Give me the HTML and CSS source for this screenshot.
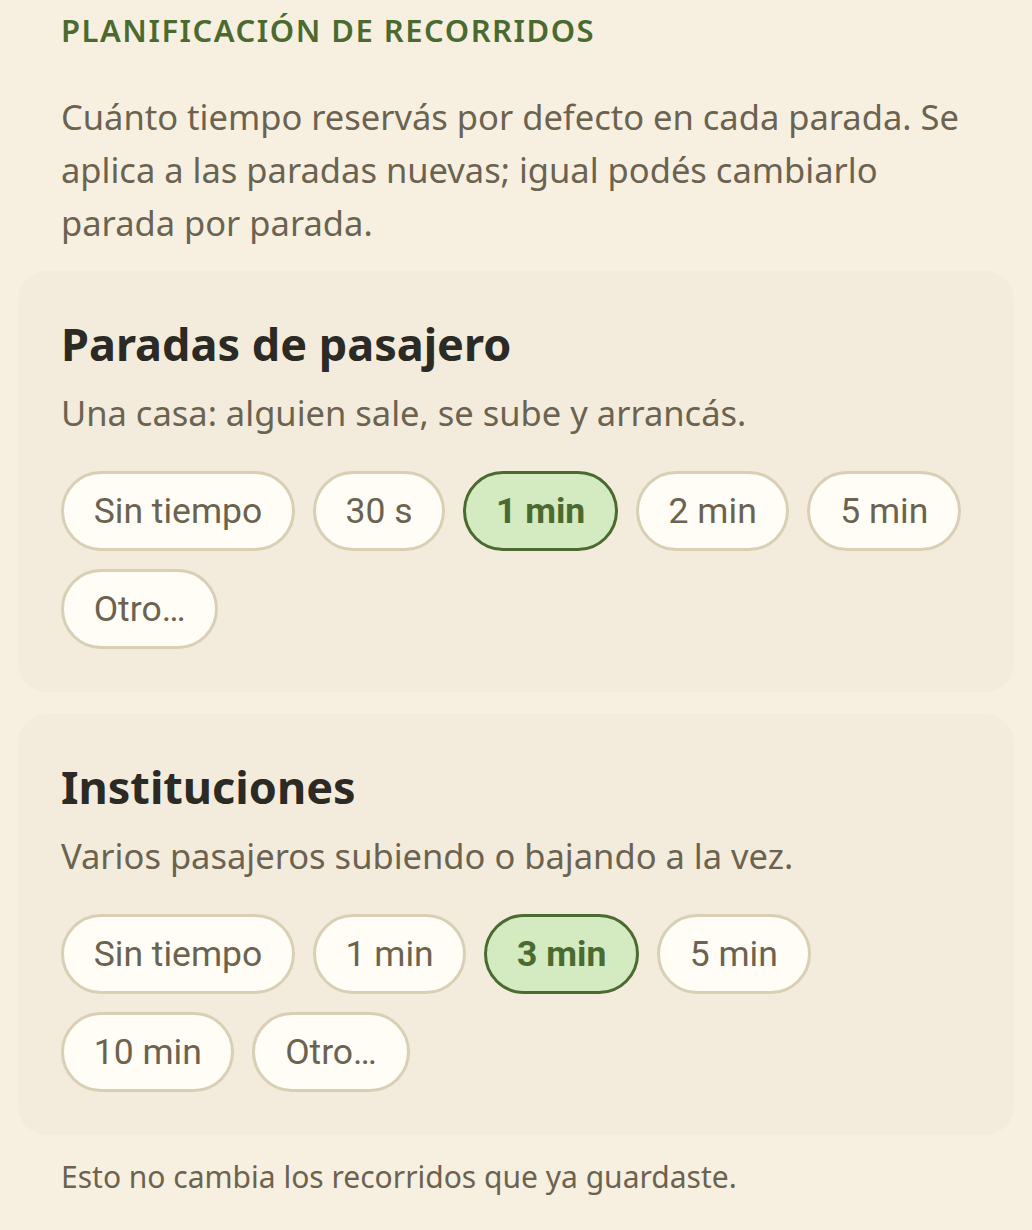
FILE: index.html
```html
<!DOCTYPE html>
<html lang="es">
<head>
<meta charset="utf-8">
<link rel="stylesheet" href="styles.css">
</head>
<body>
<main class="page">
  <header class="intro">
    <h2 class="eyebrow">PLANIFICACIÓN DE RECORRIDOS</h2>
    <p class="lead">Cuánto tiempo reservás por defecto en cada parada. Se aplica a las paradas nuevas; igual podés cambiarlo parada por parada.</p>
  </header>

  <section class="card">
    <h3 class="card-title">Paradas de pasajero</h3>
    <p class="card-sub">Una casa: alguien sale, se sube y arrancás.</p>
    <div class="chips">
      <button class="chip">Sin tiempo</button>
      <button class="chip">30 s</button>
      <button class="chip chip-on">1 min</button>
      <button class="chip">2 min</button>
      <button class="chip">5 min</button>
      <button class="chip">Otro…</button>
    </div>
  </section>

  <section class="card">
    <h3 class="card-title">Instituciones</h3>
    <p class="card-sub">Varios pasajeros subiendo o bajando a la vez.</p>
    <div class="chips">
      <button class="chip">Sin tiempo</button>
      <button class="chip">1 min</button>
      <button class="chip chip-on">3 min</button>
      <button class="chip">5 min</button>
      <button class="chip">10 min</button>
      <button class="chip">Otro…</button>
    </div>
  </section>

  <p class="note">Esto no cambia los recorridos que ya guardaste.</p>
</main>
</body>
</html>
```

FILE: styles.css
```css
html, body {
  margin: 0;
  padding: 0;
  background: #f7f0e1;
}
body {
  font-family: "Noto Sans", "Open Sans", sans-serif;
  color: #6b6350;
}
.page {
  padding: 0 18px;
  display: flex;
  flex-direction: column;
  gap: 22px;
}
.intro {
  padding: 0 43px;
}
.eyebrow {
  margin: 12px 0 0;
  font-size: 31px;
  font-weight: 600;
  letter-spacing: 1.5px;
  color: #4b6a2f;
  line-height: 36px;
}
.lead {
  margin: 42px 0 0;
  font-size: 34.5px;
  line-height: 53px;
}
.card {
  background: #f3ecdc;
  border-radius: 28px;
  padding: 47px 43px 43px;
}
.card-title {
  margin: 0;
  font-size: 45px;
  line-height: 52px;
  font-weight: 700;
  color: #2b2a24;
}
.card-sub {
  margin: 21px 0 0;
  font-size: 34.5px;
  line-height: 44px;
}
.chips {
  margin-top: 36px;
  display: flex;
  flex-wrap: wrap;
  gap: 18px;
}
.chip {
  font-family: "Roboto", sans-serif;
  font-size: 35.5px;
  color: #6b6350;
  background: #fffdf6;
  border: 3px solid #d8cfb4;
  border-radius: 999px;
  height: 80px;
  padding: 0 29.7px;
}
.chip-on {
  background: #d4ebc2;
  border-color: #4b6a2f;
  color: #4b6a2f;
  font-weight: 700;
}
.note {
  margin: 0 43px;
  font-size: 30px;
  line-height: 40px;
}
```
